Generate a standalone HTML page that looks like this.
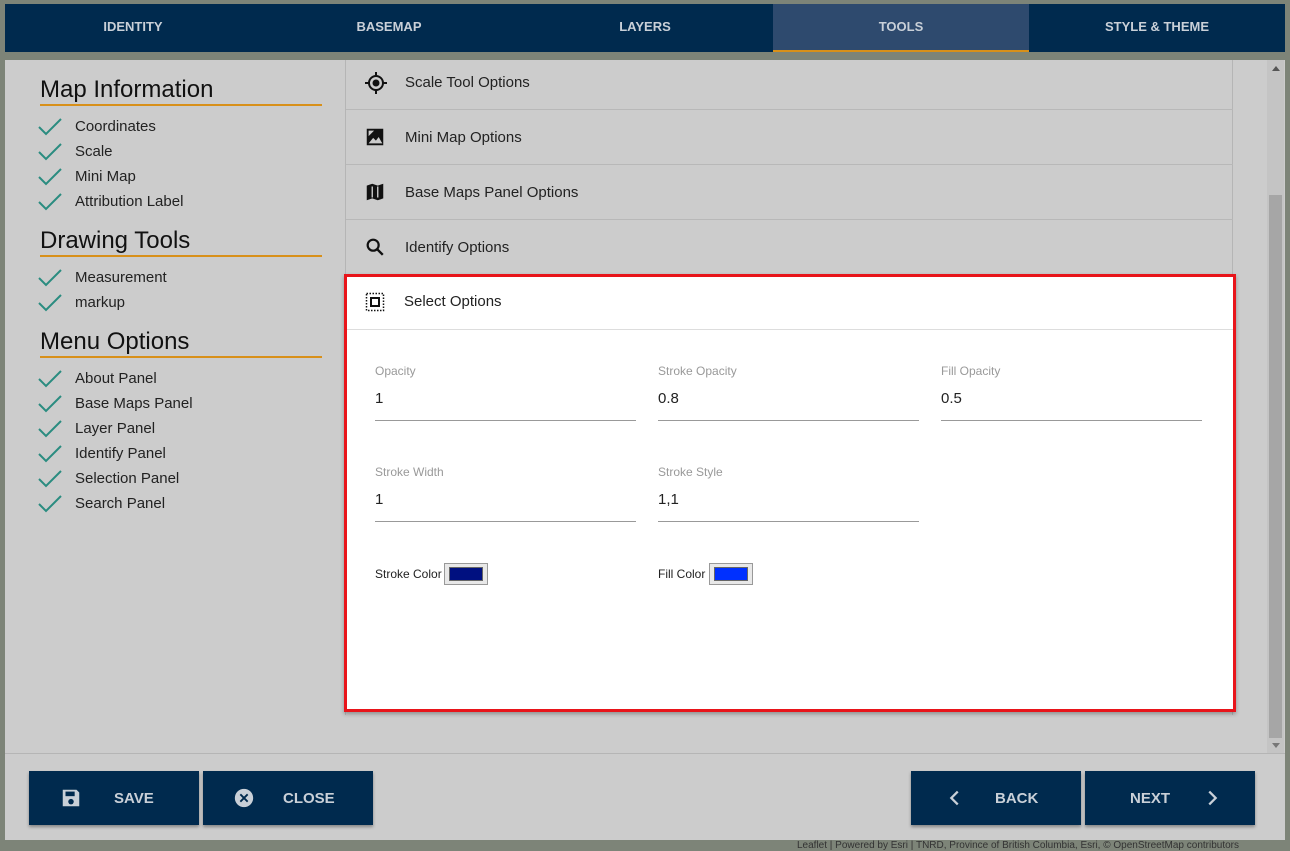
<!DOCTYPE html>
<html><head><style>
*{box-sizing:border-box;margin:0;padding:0}
body{width:1290px;height:846px;overflow:hidden;background:#7d8478;font-family:"Liberation Sans",sans-serif;position:relative}
.tabs{position:absolute;left:5px;top:4px;width:1280px;height:48px;background:#002a4e;display:flex}
.tab{flex:1;color:#c9d0d8;font-size:13px;font-weight:bold;text-align:center;line-height:46px}
.tab.on{background:#2e4a6e;border-bottom:2px solid #d8901a}
.modal{position:absolute;left:5px;top:60px;width:1280px;height:780px;background:#cccccc}
.sb{position:absolute;left:1262px;top:0;width:17px;height:694px;background:#c4c4c4}
.thumb{position:absolute;left:2px;top:135px;width:13px;height:543px;background:#a6a6a6}
.sb .ua{position:absolute;left:5px;top:6px;border:4px solid transparent;border-bottom:5px solid #555;border-top:0}
.sb .da{position:absolute;left:5px;top:683px;border:4px solid transparent;border-top:5px solid #777;border-bottom:0}
.h{position:absolute;left:35px;font-size:24px;color:#111;width:282px;border-bottom:2px solid #d8901a;line-height:28px}
.it{position:absolute;left:70px;font-size:15px;color:#222}
.panel{position:absolute;left:340px;top:0;width:888px;height:655px;border-left:1px solid #b5b5b5;border-right:1px solid #b5b5b5}
.row{position:absolute;left:0;width:887px;height:55px;border-bottom:1px solid #b8b8b8;font-size:15px;color:#222;line-height:55px;padding-left:59px}
.row svg{position:absolute;left:18px;top:16px}
.sel{position:absolute;left:-2px;top:214px;width:892px;height:438px;background:#fff;border:3px solid #e8141a;box-shadow:0 2px 4px rgba(0,0,0,.3)}
.lab{position:absolute;font-size:12px;color:#999}
.val{position:absolute;font-size:15px;color:#222}
.ul{position:absolute;height:1px;background:#999;width:261px}
.sw{position:absolute;width:44px;height:22px;border:1px solid #999;background:#e8e8e8;padding:3px 4px}
.sw div{width:100%;height:100%;border:1px solid #666}
.btn{position:absolute;top:711px;width:170px;height:54px;background:#002a4e;color:#c9d0d8;font-size:15px;font-weight:bold;box-shadow:0 2px 3px rgba(0,0,0,.35)}
.btn span{position:absolute;top:19px}
.btn svg{position:absolute;top:16px}
.foot{position:absolute;left:0;top:693px;width:1280px;height:1px;background:#b5b5b5}
.attr{position:absolute;left:797px;top:840px;font-size:10px;color:#333;white-space:nowrap}
</style></head><body>
<div class="tabs"><div class="tab">IDENTITY</div><div class="tab">BASEMAP</div><div class="tab">LAYERS</div><div class="tab on">TOOLS</div><div class="tab">STYLE &amp; THEME</div></div>
<div class="modal">
<div class="h" style="top:16px">Map Information</div>
<div class="it" style="top:58px">Coordinates</div><div class="it" style="top:83px">Scale</div><div class="it" style="top:108px">Mini Map</div><div class="it" style="top:133px">Attribution Label</div>
<div class="h" style="top:167px">Drawing Tools</div>
<div class="it" style="top:209px">Measurement</div><div class="it" style="top:234px">markup</div>
<div class="h" style="top:268px">Menu Options</div>
<div class="it" style="top:310px">About Panel</div><div class="it" style="top:335px">Base Maps Panel</div><div class="it" style="top:360px">Layer Panel</div><div class="it" style="top:385px">Identify Panel</div><div class="it" style="top:410px">Selection Panel</div><div class="it" style="top:435px">Search Panel</div>
<svg style="position:absolute;left:0;top:0" width="70" height="460">
<g fill="none" stroke="#2a8c80" stroke-width="2">
<path d="M34 67l7 7 15-15"/><path d="M34 92l7 7 15-15"/><path d="M34 117l7 7 15-15"/><path d="M34 142l7 7 15-15"/>
<path d="M34 218l7 7 15-15"/><path d="M34 243l7 7 15-15"/>
<path d="M34 319l7 7 15-15"/><path d="M34 344l7 7 15-15"/><path d="M34 369l7 7 15-15"/><path d="M34 394l7 7 15-15"/><path d="M34 419l7 7 15-15"/><path d="M34 444l7 7 15-15"/></g></svg>
<div class="panel">
<div class="row" style="top:-5px"><svg width="24" height="24" viewBox="0 0 24 24"><circle cx="12" cy="12" r="7" fill="none" stroke="#111" stroke-width="2"/><circle cx="12" cy="12" r="3.5" fill="#111"/><path d="M12 1v4M12 19v4M1 12h4M19 12h4" stroke="#111" stroke-width="2"/></svg>Scale Tool Options</div>
<div class="row" style="top:50px"><svg width="22" height="22" viewBox="0 0 24 24"><path d="M3 3h18v18H3z" fill="#111"/><path d="M5 19l5-6 3 3 3-4 4 7z" fill="#ccc"/><path d="M5 5h6l-6 6z" fill="#ccc"/></svg>Mini Map Options</div>
<div class="row" style="top:105px"><svg width="22" height="22" viewBox="0 0 24 24"><path d="M3 5l6-2 6 2 6-2v16l-6 2-6-2-6 2z" fill="#111"/><path d="M9 6v12M15 6v12" stroke="#ccc" stroke-width="1.5"/></svg>Base Maps Panel Options</div>
<div class="row" style="top:160px"><svg width="22" height="22" viewBox="0 0 24 24"><circle cx="10" cy="10" r="6" fill="none" stroke="#111" stroke-width="2.4"/><path d="M14.5 14.5l6 6" stroke="#111" stroke-width="2.6"/></svg>Identify Options</div>
<div class="sel">
<div class="row" style="top:0;left:0;width:886px;border-color:#ddd;line-height:50px;height:53px;padding-left:57px"><svg style="left:18px;top:15px" width="20" height="20" viewBox="0 0 20 20"><rect x="1.5" y="1.5" width="17" height="17" fill="none" stroke="#111" stroke-width="1.5" stroke-dasharray="1.5 1.5"/><rect x="6" y="6" width="8" height="8" fill="none" stroke="#111" stroke-width="2"/></svg>Select Options</div>
<div class="lab" style="left:28px;top:87px">Opacity</div><div class="val" style="left:28px;top:113px">1</div><div class="ul" style="left:28px;top:143px"></div>
<div class="lab" style="left:311px;top:87px">Stroke Opacity</div><div class="val" style="left:311px;top:113px">0.8</div><div class="ul" style="left:311px;top:143px"></div>
<div class="lab" style="left:594px;top:87px">Fill Opacity</div><div class="val" style="left:594px;top:113px">0.5</div><div class="ul" style="left:594px;top:143px"></div>
<div class="lab" style="left:28px;top:188px">Stroke Width</div><div class="val" style="left:28px;top:214px">1</div><div class="ul" style="left:28px;top:244px"></div>
<div class="lab" style="left:311px;top:188px">Stroke Style</div><div class="val" style="left:311px;top:214px">1,1</div><div class="ul" style="left:311px;top:244px"></div>
<div class="lab" style="left:28px;top:290px;color:#222">Stroke Color</div><div class="sw" style="left:97px;top:286px"><div style="background:#001080"></div></div>
<div class="lab" style="left:311px;top:290px;color:#222">Fill Color</div><div class="sw" style="left:362px;top:286px"><div style="background:#0030ff"></div></div>
</div>
</div>
<div class="sb"><div class="ua"></div><div class="thumb"></div><div class="da"></div></div>
<div class="foot"></div>
<div class="btn" style="left:24px"><svg style="left:31px" width="22" height="22" viewBox="0 0 24 24"><path d="M3 3h15l3 3v15H3z" fill="#c9d0d8"/><rect x="6" y="5" width="10" height="5" fill="#002a4e"/><circle cx="12" cy="16" r="3" fill="#002a4e"/></svg><span style="left:85px">SAVE</span></div>
<div class="btn" style="left:198px"><svg style="left:30px" width="22" height="22" viewBox="0 0 24 24"><circle cx="12" cy="12" r="10" fill="#c9d0d8"/><path d="M8 8l8 8M16 8l-8 8" stroke="#002a4e" stroke-width="2"/></svg><span style="left:80px">CLOSE</span></div>
<div class="btn" style="left:906px"><svg style="left:33px" width="22" height="22" viewBox="0 0 24 24"><path d="M15 5l-7 7 7 7" fill="none" stroke="#c9d0d8" stroke-width="2.5"/></svg><span style="left:84px">BACK</span></div>
<div class="btn" style="left:1080px"><svg style="left:116px" width="22" height="22" viewBox="0 0 24 24"><path d="M9 5l7 7-7 7" fill="none" stroke="#c9d0d8" stroke-width="2.5"/></svg><span style="left:45px">NEXT</span></div>
</div>
<div class="attr">Leaflet | Powered by Esri | TNRD, Province of British Columbia, Esri, © OpenStreetMap contributors</div>
</body></html>
